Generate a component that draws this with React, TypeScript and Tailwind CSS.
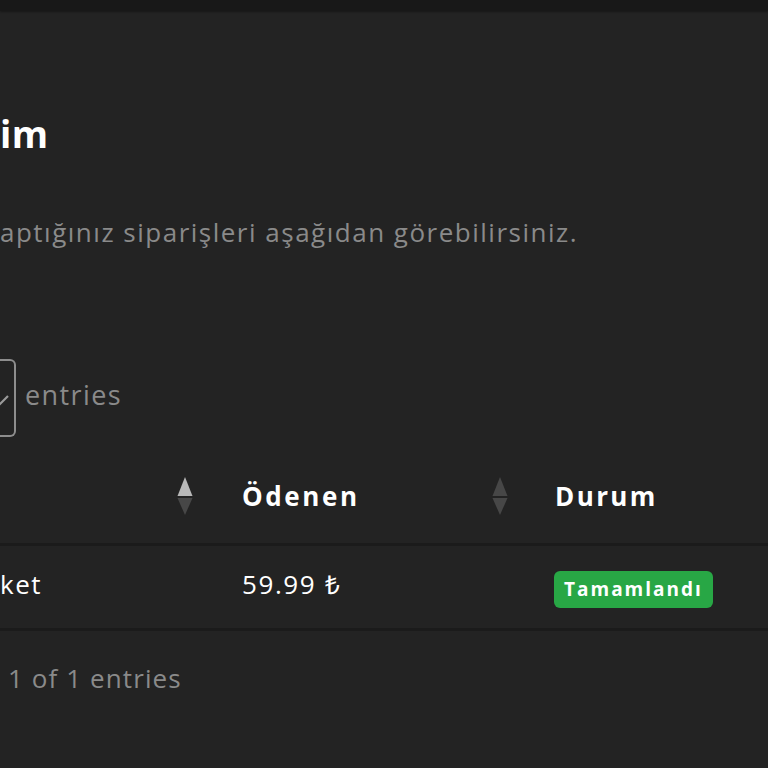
const SortIcon = ({ up }: { up: string }) => (
  <svg width="16" height="38" viewBox="0 0 16 38" className="shrink-0">
    <path d="M8 0 L15.5 19 L0.5 19 Z" fill={up} />
    <path d="M0.5 21 L15.5 21 L8 38 Z" fill="#474747" />
  </svg>
);

export default function App() {
  return (
    <div className="min-h-screen bg-[#232323] font-['Open_Sans',sans-serif] overflow-hidden">
      <div className="h-[11px] bg-[#181818] shadow-[0_1px_2px_rgba(0,0,0,0.35)]" />

      <h1 className="mt-[105px] h-[36px] text-[37px] leading-[36px] font-bold text-white whitespace-nowrap tracking-[0.5px]">
        im
      </h1>

      <p className="mt-[66px] h-[28px] text-[26px] leading-[28px] text-[#8a8a8a] whitespace-nowrap tracking-[1.5px]">
        aptığınız siparişleri aşağıdan görebilirsiniz.
      </p>

      <div className="mt-[113px] flex items-center gap-[9px]">
        <div className="w-[16px] h-[78px] border-2 border-l-0 border-[#8d8d8d] rounded-r-[6px] overflow-hidden flex items-center">
          <svg width="20" height="12" viewBox="0 0 20 12" className="shrink-0 -ml-[10px] mt-[4px]">
            <path d="M2 2 L10 10 L18 2" stroke="#9a9a9a" strokeWidth="2.2" fill="none" />
          </svg>
        </div>
        <span className="text-[27px] leading-none text-[#8a8a8a] -mt-[8px] tracking-[1.4px]">entries</span>
      </div>

      <div className="mt-[12px]">
        <div className="grid grid-cols-[212px_313px_1fr] h-[97px] border-b-[3px] border-[#1b1b1b] items-center">
          <div className="flex justify-end pr-[19px]">
            <SortIcon up="#b8b8b8" />
          </div>
          <div className="flex items-center justify-between pl-[30px] pr-[17px]">
            <span className="text-[26px] font-bold text-white tracking-[2.6px]">Ödenen</span>
            <SortIcon up="#474747" />
          </div>
          <div className="pl-[30px]">
            <span className="text-[26px] font-bold text-white tracking-[2.4px]">Durum</span>
          </div>
        </div>

        <div className="grid grid-cols-[212px_313px_1fr] h-[85px] border-b-[3px] border-[#1b1b1b] items-center">
          <div className="text-[26px] text-white tracking-[1.5px] -mt-[6px]">ket</div>
          <div className="pl-[30px] text-[26px] text-white tracking-[1.6px] -mt-[6px]">59.99 ₺</div>
          <div className="pl-[29px] mt-[5px]">
            <span className="inline-flex items-center h-[37px] px-[10px] rounded-[6px] bg-[#28a745] text-[19px] font-bold text-white tracking-[2px]">
              Tamamlandı
            </span>
          </div>
        </div>
      </div>

      <div className="mt-[34px] pl-[8px] text-[26px] leading-none text-[#8a8a8a] tracking-[1.1px]">1 of 1 entries</div>
    </div>
  );
}
